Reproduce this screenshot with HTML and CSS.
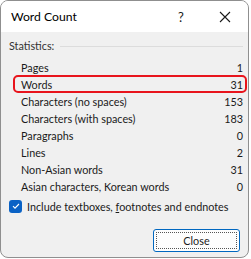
FILE: index.html
```html
<!DOCTYPE html>
<html>
<head>
<meta charset="utf-8">
<link rel="stylesheet" href="styles.css">
</head>
<body>
<div class="dialog">
  <div class="titlebar">
    <span class="title">Word Count</span>
    <span class="help">?</span>
    <span class="close-x">
      <svg width="12" height="12" viewBox="0 0 12 12"><path d="M1 1L11 11M11 1L1 11" stroke="#1a1a1a" stroke-width="1.1" fill="none"/></svg>
    </span>
  </div>
  <div class="content">
    <div class="group-head"><span>Statistics:</span><span class="rule"></span></div>
    <div class="stats">
      <div class="row"><span>Pages</span><span>1</span></div>
      <div class="row highlight"><span>Words</span><span>31</span></div>
      <div class="row"><span>Characters (no spaces)</span><span>153</span></div>
      <div class="row"><span>Characters (with spaces)</span><span>183</span></div>
      <div class="row"><span>Paragraphs</span><span>0</span></div>
      <div class="row"><span>Lines</span><span>2</span></div>
      <div class="row"><span>Non-Asian words</span><span>31</span></div>
      <div class="row"><span>Asian characters, Korean words</span><span>0</span></div>
    </div>
    <label class="check">
      <span class="box"><svg width="12" height="12" viewBox="0 0 12 12"><path d="M3 6.2L5 8.2L9 4" stroke="#fff" stroke-width="1.1" fill="none"/></svg></span>
      <span>Include textboxes, <u>f</u>ootnotes and endnotes</span>
    </label>
    <div class="actions">
      <button class="btn"><span class="focus">Close</span></button>
    </div>
  </div>
</div>
</body>
</html>
```
FILE: styles.css
```css
* { box-sizing: border-box; }
html, body { margin: 0; padding: 0; background: #ffffff; }
body {
  font-family: Lato, "Liberation Sans", sans-serif;
  font-size: 10.8px;
  color: #1a1a1a;
  white-space: nowrap;
}
.dialog {
  width: 249px;
  height: 258px;
  border: 1px solid #8f8f8f;
  border-radius: 8px;
  background: #f0f0f0;
  overflow: hidden;
  display: flex;
  flex-direction: column;
}
.titlebar {
  height: 31px;
  background: #ffffff;
  display: flex;
  align-items: center;
  padding-left: 10px;
  flex: none;
}
.title {
  font-size: 12.2px;
  flex: 1;
  color: #000;
}
.help {
  font-size: 13px;
  width: 12px;
  margin-right: 29px;
}
.close-x {
  display: flex;
  width: 12px;
  margin-right: 17px;
}
.content {
  padding: 6px 0 0 8px;
  flex: 1;
  display: flex;
  flex-direction: column;
}
.group-head {
  display: flex;
  align-items: center;
  height: 16px;
  line-height: 16px;
  color: #333;
}
.rule {
  flex: 1;
  height: 1px;
  background: #dcdcdc;
  margin: 0 5px 0 6px;
}
.stats {
  margin-top: 5px;
  padding: 0 5px 0 12px;
}
.row {
  display: flex;
  justify-content: space-between;
  height: 17px;
  line-height: 17px;
  position: relative;
}
.highlight::after {
  content: "";
  position: absolute;
  left: -8px;
  right: -4px;
  top: -1px;
  bottom: 0;
  border: 2px solid #e8141c;
  border-radius: 5px;
}
.check {
  display: flex;
  align-items: center;
  margin-top: 4px;
  height: 14px;
}
.box {
  width: 13px;
  height: 13px;
  border-radius: 3px;
  background: #0a62c5;
  display: flex;
  align-items: center;
  justify-content: center;
  margin-right: 5px;
}
.actions {
  display: flex;
  justify-content: flex-end;
  margin-top: 16px;
  padding-right: 8px;
}
.btn {
  width: 87px;
  height: 23px;
  border: 1px solid #0067c0;
  border-radius: 3px;
  background: #fdfdfd;
  padding: 2px;
  font: inherit;
  color: #1a1a1a;
  display: flex;
}
.focus {
  flex: 1;
  border: 1px dotted #555;
  display: flex;
  align-items: center;
  justify-content: center;
  line-height: 15px;
}
```
